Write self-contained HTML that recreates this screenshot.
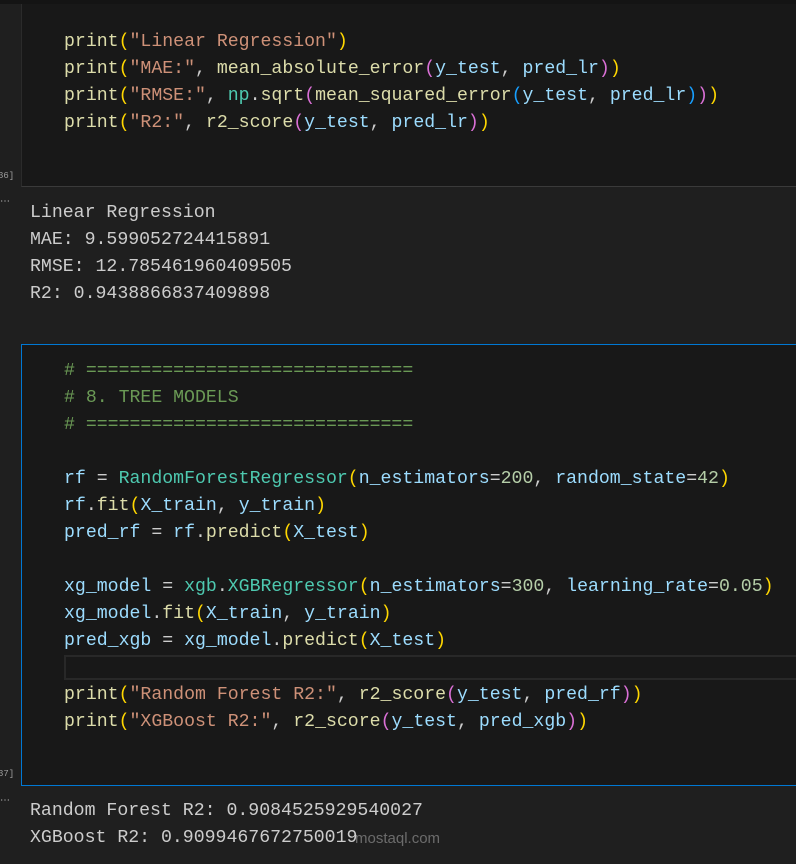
<!DOCTYPE html>
<html><head><meta charset="utf-8"><style>
body{margin:0;width:796px;height:864px;background:#1f1f1f;overflow:hidden;position:relative;font-family:"Liberation Mono",monospace;}
.cell{position:absolute;left:21px;right:-2px;background:#181818;}
.l{position:absolute;left:64px;font-size:18.2px;line-height:27px;white-space:pre;color:#9cdcfe;margin-top:3px;}
.o{position:absolute;left:30px;font-size:18.2px;line-height:27px;white-space:pre;color:#cccccc;margin-top:3px;}
.f{color:#dcdcaa}.y{color:#ffd700}.s{color:#ce9178}.p{color:#da70d6}.b{color:#179fff}.c{color:#4ec9b0}.n{color:#b5cea8}.g{color:#6a9955}.w{color:#cccccc}
.num{position:absolute;left:-2px;font-size:9px;color:#9d9d9d;}
.dots{position:absolute;left:0;font-size:10px;color:#ccc;}
</style></head><body>
<div style="position:absolute;left:0;top:0;width:796px;height:4px;background:#141414"></div>
<div class="cell" style="top:4px;height:182px;border-left:1px solid #2b2b2b;border-bottom:1px solid #3a3a3a"></div>
<div class="l" style="top:26px"><span class="f">print</span><span class="y">(</span><span class="s">"Linear Regression"</span><span class="y">)</span></div>
<div class="l" style="top:53px"><span class="f">print</span><span class="y">(</span><span class="s">"MAE:"</span><span class="w">, </span><span class="f">mean_absolute_error</span><span class="p">(</span>y_test<span class="w">, </span>pred_lr<span class="p">)</span><span class="y">)</span></div>
<div class="l" style="top:80px"><span class="f">print</span><span class="y">(</span><span class="s">"RMSE:"</span><span class="w">, </span><span class="c">np</span><span class="w">.</span><span class="f">sqrt</span><span class="p">(</span><span class="f">mean_squared_error</span><span class="b">(</span>y_test<span class="w">, </span>pred_lr<span class="b">)</span><span class="p">)</span><span class="y">)</span></div>
<div class="l" style="top:107px"><span class="f">print</span><span class="y">(</span><span class="s">"R2:"</span><span class="w">, </span><span class="f">r2_score</span><span class="p">(</span>y_test<span class="w">, </span>pred_lr<span class="p">)</span><span class="y">)</span></div>
<div class="num" style="top:171px">36]</div>
<div class="dots" style="top:196px">⋯</div>
<div class="o" style="top:197px">Linear Regression</div>
<div class="o" style="top:224px">MAE: 9.599052724415891</div>
<div class="o" style="top:251px">RMSE: 12.785461960409505</div>
<div class="o" style="top:278px">R2: 0.9438866837409898</div>

<div class="cell" style="top:344px;height:440px;border:1px solid #0078d4;right:-2px"></div>
<div style="position:absolute;left:64px;top:655px;width:740px;height:25px;border:2px solid #282828;box-sizing:border-box"></div>
<div class="l g" style="top:355px"># ==============================</div>
<div class="l g" style="top:382px"># 8. TREE MODELS</div>
<div class="l g" style="top:409px"># ==============================</div>
<div class="l" style="top:463px">rf <span class="w">=</span> <span class="c">RandomForestRegressor</span><span class="y">(</span>n_estimators<span class="w">=</span><span class="n">200</span><span class="w">, </span>random_state<span class="w">=</span><span class="n">42</span><span class="y">)</span></div>
<div class="l" style="top:490px">rf<span class="w">.</span><span class="f">fit</span><span class="y">(</span>X_train<span class="w">, </span>y_train<span class="y">)</span></div>
<div class="l" style="top:517px">pred_rf <span class="w">=</span> rf<span class="w">.</span><span class="f">predict</span><span class="y">(</span>X_test<span class="y">)</span></div>
<div class="l" style="top:571px">xg_model <span class="w">=</span> <span class="c">xgb</span><span class="w">.</span><span class="c">XGBRegressor</span><span class="y">(</span>n_estimators<span class="w">=</span><span class="n">300</span><span class="w">, </span>learning_rate<span class="w">=</span><span class="n">0.05</span><span class="y">)</span></div>
<div class="l" style="top:598px">xg_model<span class="w">.</span><span class="f">fit</span><span class="y">(</span>X_train<span class="w">, </span>y_train<span class="y">)</span></div>
<div class="l" style="top:625px">pred_xgb <span class="w">=</span> xg_model<span class="w">.</span><span class="f">predict</span><span class="y">(</span>X_test<span class="y">)</span></div>
<div class="l" style="top:679px"><span class="f">print</span><span class="y">(</span><span class="s">"Random Forest R2:"</span><span class="w">, </span><span class="f">r2_score</span><span class="p">(</span>y_test<span class="w">, </span>pred_rf<span class="p">)</span><span class="y">)</span></div>
<div class="l" style="top:706px"><span class="f">print</span><span class="y">(</span><span class="s">"XGBoost R2:"</span><span class="w">, </span><span class="f">r2_score</span><span class="p">(</span>y_test<span class="w">, </span>pred_xgb<span class="p">)</span><span class="y">)</span></div>
<div class="num" style="top:769px">37]</div>
<div class="dots" style="top:795px">⋯</div>
<div class="o" style="top:795px">Random Forest R2: 0.9084525929540027</div>
<div class="o" style="top:822px">XGBoost R2: 0.9099467672750019</div>
<div style="position:absolute;left:355px;top:830px;font-family:'Liberation Sans',sans-serif;font-size:15px;color:rgba(200,200,200,0.45)">mostaql.com</div>
</body></html>
